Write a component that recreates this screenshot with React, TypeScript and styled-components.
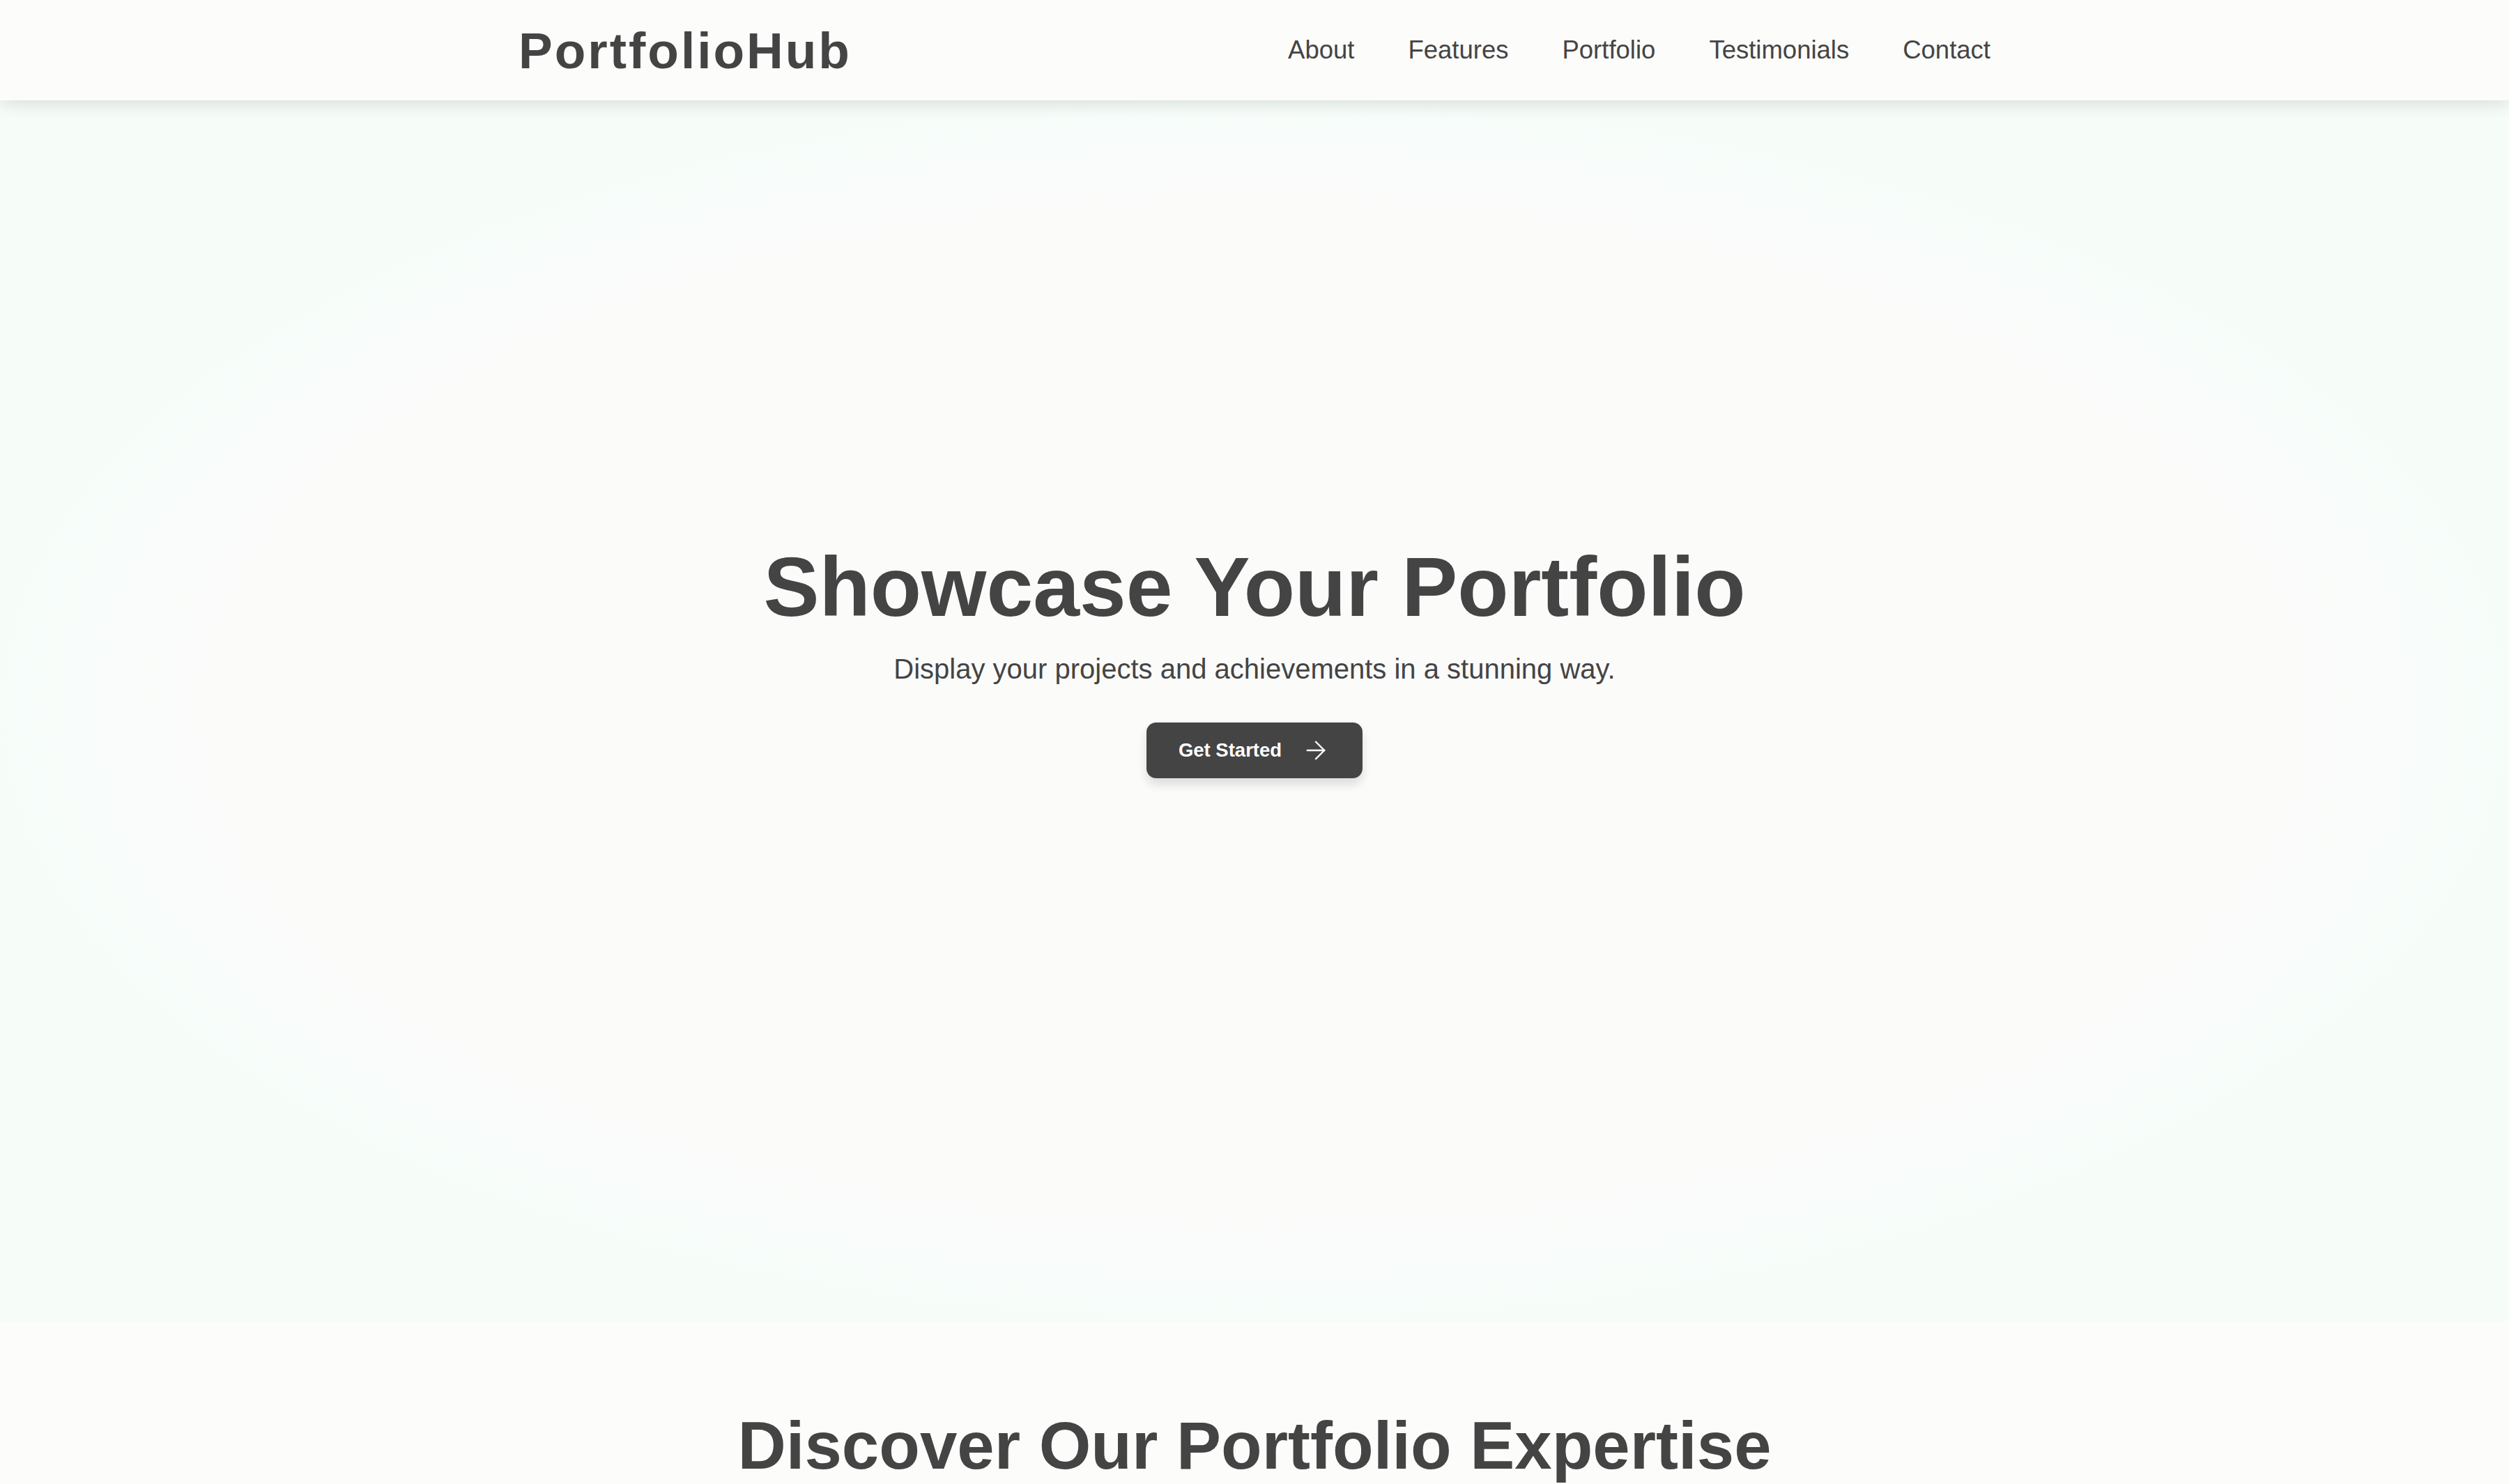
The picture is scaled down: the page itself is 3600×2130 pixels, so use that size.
import React from "react";
import styled, { createGlobalStyle } from "styled-components";
import { ArrowRight } from "lucide-react";

const GlobalStyle = createGlobalStyle`
  * {
    box-sizing: border-box;
  }
  body {
    margin: 0;
    background: #fcfcfa;
    color: #444;
    font-family: "Liberation Sans", Arial, sans-serif;
  }
`;

const navLinks = ["About", "Features", "Portfolio", "Testimonials", "Contact"];

const App: React.FC = () => {
  return (
    <>
      <GlobalStyle />
      <Header>
        <NavInner>
          <Logo>PortfolioHub</Logo>
          <NavList>
            {navLinks.map((link) => (
              <li key={link}>
                <NavLink href={`#${link.toLowerCase()}`}>{link}</NavLink>
              </li>
            ))}
          </NavList>
        </NavInner>
      </Header>
      <Hero>
        <HeroTitle>Showcase Your Portfolio</HeroTitle>
        <HeroText>Display your projects and achievements in a stunning way.</HeroText>
        <CtaButton>
          Get Started
          <ArrowRight size={42} strokeWidth={1.4} />
        </CtaButton>
      </Hero>
      <Expertise id="features">
        <SectionTitle>Discover Our Portfolio Expertise</SectionTitle>
      </Expertise>
    </>
  );
};

export default App;

const Header = styled.header`
  position: relative;
  z-index: 2;
  height: 144px;
  background: #fcfcfb;
  box-shadow: 0 5px 23px rgba(0, 0, 0, 0.12);
`;

const NavInner = styled.nav`
  max-width: 2204px;
  height: 100%;
  margin: 0 auto;
  padding: 0 46px;
  display: flex;
  align-items: center;
  justify-content: space-between;
`;

const Logo = styled.div`
  font-size: 73px;
  font-weight: 700;
  letter-spacing: 3px;
  color: #444;
`;

const NavList = styled.ul`
  list-style: none;
  margin: 0;
  padding: 0;
  display: flex;
  gap: 77px;
`;

const NavLink = styled.a`
  font-size: 36.5px;
  color: #444;
  text-decoration: none;
`;

const Hero = styled.section`
  height: 1753px;
  padding-top: 626px;
  display: flex;
  flex-direction: column;
  align-items: center;
  background: radial-gradient(
      ellipse closest-side at center,
      #fbfbfa 0%,
      #fbfbfa 82%,
      #f8fcfa 94%,
      #f6fdf9 100%
    ),
    #f6fdf9;
`;

const HeroTitle = styled.h1`
  margin: 0;
  font-size: 120px;
  line-height: 1.2;
  font-weight: 700;
  color: #444;
`;

const HeroText = styled.p`
  margin: 22px 0 0;
  font-size: 40px;
  line-height: 1.2;
  color: #444;
`;

const CtaButton = styled.button`
  margin-top: 53px;
  height: 80px;
  padding: 0 46px;
  display: flex;
  align-items: center;
  gap: 28px;
  border: none;
  border-radius: 14px;
  background: #444;
  color: #fff;
  font-family: "Liberation Sans", Arial, sans-serif;
  font-size: 27.5px;
  font-weight: 700;
  box-shadow: 0 9px 14px rgba(0, 0, 0, 0.12);
  cursor: pointer;
`;

const Expertise = styled.section`
  min-height: 600px;
  padding-top: 120px;
  background: #fcfcfa;
`;

const SectionTitle = styled.h2`
  margin: 0;
  text-align: center;
  font-size: 96px;
  line-height: 1.2;
  font-weight: 700;
  color: #444;
`;
